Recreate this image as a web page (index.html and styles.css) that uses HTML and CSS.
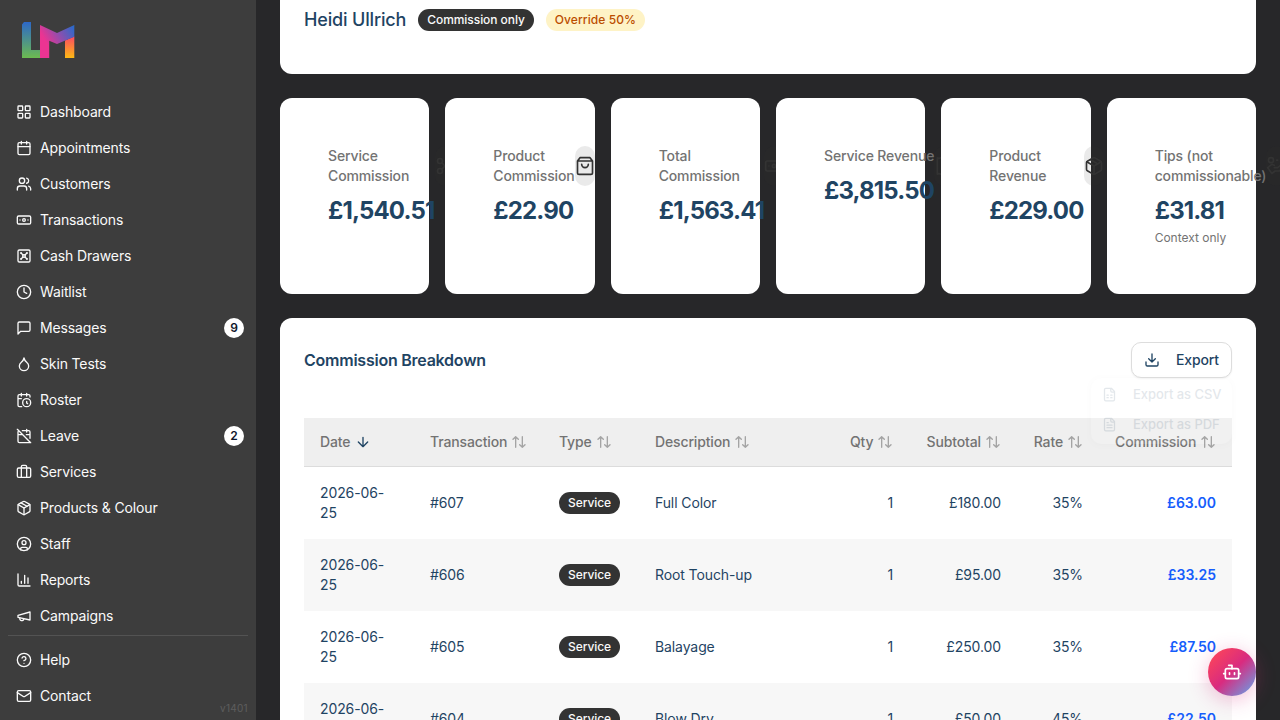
FILE: index.html
```html
<!DOCTYPE html>
<html lang="en">
<head>
<meta charset="utf-8">
<title>Commission report</title>
<link rel="stylesheet" href="styles.css">
</head>
<body>
<svg class="defs" width="0" height="0">
  <symbol id="sort" viewBox="0 0 24 24"><path d="m21 16-4 4-4-4M17 20V4M3 8l4-4 4 4M7 4v16"/></symbol>
  <symbol id="package" viewBox="0 0 24 24"><path d="m7.5 4.27 9 5.15"/><path d="M21 8a2 2 0 0 0-1-1.73l-7-4a2 2 0 0 0-2 0l-7 4A2 2 0 0 0 3 8v8a2 2 0 0 0 1 1.73l7 4a2 2 0 0 0 2 0l7-4A2 2 0 0 0 21 16Z"/><path d="m3.3 7 8.7 5 8.7-5"/><path d="M12 22V12"/></symbol>
  <symbol id="banknote" viewBox="0 0 24 24"><rect width="20" height="12" x="2" y="6" rx="2"/><circle cx="12" cy="12" r="2"/><path d="M6 12h.01M18 12h.01"/></symbol>
</svg>
<div class="app">
  <aside class="sidebar">
    <div class="brand">
      <svg width="56" height="38" viewBox="20 21 56 38">
        <defs>
          <linearGradient id="gl" x1="0" y1="0" x2="0" y2="1"><stop offset="0" stop-color="#2d68c8"/><stop offset="1" stop-color="#6cbb50"/></linearGradient>
          <linearGradient id="gm" gradientUnits="userSpaceOnUse" x1="46" y1="42" x2="73" y2="26"><stop offset="0" stop-color="#eb3492"/><stop offset="1" stop-color="#2b6acb"/></linearGradient>
          <linearGradient id="go" x1="0" y1="0" x2="0" y2="1"><stop offset="0" stop-color="#fb4a63"/><stop offset="1" stop-color="#fdb913"/></linearGradient>
        </defs>
        <path fill="url(#gl)" d="M24 22h7v28h9v8H22V24.500z"/>
        <path fill="url(#go)" d="M65 40.500 74.300 36.500V58H65z"/>
        <path fill="url(#gm)" d="M40 25 57 33 74.300 25V36.800L57 44 49.200 40.700V58H40z"/>
      </svg>
    </div>
    <nav class="nav">
      <a class="item"><svg class="i" viewBox="0 0 24 24"><rect width="7" height="7" x="3" y="3" rx="1"/><rect width="7" height="7" x="14" y="3" rx="1"/><rect width="7" height="7" x="14" y="14" rx="1"/><rect width="7" height="7" x="3" y="14" rx="1"/></svg><span>Dashboard</span></a>
      <a class="item"><svg class="i" viewBox="0 0 24 24"><path d="M8 2v4M16 2v4M3 10h18"/><rect width="18" height="18" x="3" y="4" rx="2"/></svg><span>Appointments</span></a>
      <a class="item"><svg class="i" viewBox="0 0 24 24"><path d="M16 21v-2a4 4 0 0 0-4-4H6a4 4 0 0 0-4 4v2"/><circle cx="9" cy="7" r="4"/><path d="M22 21v-2a4 4 0 0 0-3-3.870M16 3.130a4 4 0 0 1 0 7.750"/></svg><span>Customers</span></a>
      <a class="item"><svg class="i"><use href="#banknote"/></svg><span>Transactions</span></a>
      <a class="item"><svg class="i" viewBox="0 0 24 24"><rect width="18" height="18" x="3" y="3" rx="2"/><circle cx="7.500" cy="7.500" r=".5"/><path d="m7.900 7.900 2.700 2.700"/><circle cx="16.500" cy="7.500" r=".5"/><path d="m13.400 10.600 2.700-2.700"/><circle cx="7.500" cy="16.500" r=".5"/><path d="m7.900 16.100 2.700-2.700"/><circle cx="16.500" cy="16.500" r=".5"/><path d="m13.400 13.400 2.700 2.700"/><circle cx="12" cy="12" r="2"/></svg><span>Cash Drawers</span></a>
      <a class="item"><svg class="i" viewBox="0 0 24 24"><circle cx="12" cy="12" r="10"/><path d="M12 6v6l4 2"/></svg><span>Waitlist</span></a>
      <a class="item"><svg class="i" viewBox="0 0 24 24"><path d="M21 15a2 2 0 0 1-2 2H7l-4 4V5a2 2 0 0 1 2-2h14a2 2 0 0 1 2 2z"/></svg><span>Messages</span><b class="count">9</b></a>
      <a class="item"><svg class="i" viewBox="0 0 24 24"><path d="M12 22a7 7 0 0 0 7-7c0-2-1-3.900-3-5.500s-3.500-4-4-6.500c-.5 2.500-2 4.900-4 6.500C6 11.100 5 13 5 15a7 7 0 0 0 7 7z"/></svg><span>Skin Tests</span></a>
      <a class="item"><svg class="i" viewBox="0 0 24 24"><path d="M21 7.500V6a2 2 0 0 0-2-2H5a2 2 0 0 0-2 2v14a2 2 0 0 0 2 2h3.500M16 2v4M8 2v4M3 10h5M17.500 17.500 16 16.300V14"/><circle cx="16" cy="16" r="6"/></svg><span>Roster</span></a>
      <a class="item"><svg class="i" viewBox="0 0 24 24"><path d="M4.200 4.200A2 2 0 0 0 3 6v14a2 2 0 0 0 2 2h14a2 2 0 0 0 1.820-1.180M21 15.500V6a2 2 0 0 0-2-2H9.500M16 2v4M3 10h7M21 10h-5.500M2 2l20 20"/></svg><span>Leave</span><b class="count">2</b></a>
      <a class="item"><svg class="i" viewBox="0 0 24 24"><path d="M16 20V4a2 2 0 0 0-2-2h-4a2 2 0 0 0-2 2v16"/><rect width="20" height="14" x="2" y="6" rx="2"/></svg><span>Services</span></a>
      <a class="item"><svg class="i"><use href="#package"/></svg><span>Products &amp; Colour</span></a>
      <a class="item"><svg class="i" viewBox="0 0 24 24"><circle cx="12" cy="12" r="10"/><circle cx="12" cy="10" r="3"/><path d="M7 20.662V19a2 2 0 0 1 2-2h6a2 2 0 0 1 2 2v1.662"/></svg><span>Staff</span></a>
      <a class="item"><svg class="i" viewBox="0 0 24 24"><path d="M3 3v16a2 2 0 0 0 2 2h16M18 17V9M13 17V5M8 17v-3"/></svg><span>Reports</span></a>
      <a class="item"><svg class="i" viewBox="0 0 24 24"><path d="m3 11 18-5v12L3 14v-3z"/><path d="M11.600 16.800a3 3 0 1 1-5.800-1.600"/></svg><span>Campaigns</span></a>
    </nav>
    <div class="nav foot">
      <a class="item"><svg class="i" viewBox="0 0 24 24"><circle cx="12" cy="12" r="10"/><path d="M9.090 9a3 3 0 0 1 5.830 1c0 2-3 3-3 3M12 17h.01"/></svg><span>Help</span></a>
      <a class="item"><svg class="i" viewBox="0 0 24 24"><rect width="20" height="16" x="2" y="4" rx="2"/><path d="m22 7-8.970 5.700a1.940 1.940 0 0 1-2.060 0L2 7"/></svg><span>Contact</span></a>
      <span class="version">v1401</span>
    </div>
  </aside>

  <main class="main">
    <section class="card profile">
      <h1>Heidi Ullrich</h1><span class="badge dark">Commission only</span><span class="badge amber">Override 50%</span>
    </section>

    <section class="stats">
      <article class="card stat"><div><p class="label">Service Commission</p><p class="value">£1,540.51</p></div><span class="pill"><svg viewBox="0 0 24 24"><circle cx="6" cy="6" r="3"/><path d="M8.120 8.120 12 12M20 4 8.120 15.880"/><circle cx="6" cy="18" r="3"/><path d="M14.800 14.800 20 20"/></svg></span></article>
      <article class="card stat"><div><p class="label">Product Commission</p><p class="value">£22.90</p></div><span class="pill"><svg viewBox="0 0 24 24"><path d="M6 2 3 6v14a2 2 0 0 0 2 2h14a2 2 0 0 0 2-2V6l-3-4ZM3 6h18M16 10a4 4 0 0 1-8 0"/></svg></span></article>
      <article class="card stat"><div><p class="label">Total Commission</p><p class="value">£1,563.41</p></div><span class="pill"><svg><use href="#banknote"/></svg></span></article>
      <article class="card stat"><div><p class="label oneline">Service Revenue</p><p class="value">£3,815.50</p></div><span class="pill"><svg viewBox="0 0 24 24"><path d="M4 2v20l2-1 2 1 2-1 2 1 2-1 2 1 2-1 2 1V2l-2 1-2-1-2 1-2-1-2 1-2-1-2 1Z"/></svg></span></article>
      <article class="card stat"><div><p class="label">Product Revenue</p><p class="value">£229.00</p></div><span class="pill"><svg><use href="#package"/></svg></span></article>
      <article class="card stat"><div><p class="label">Tips (not commissionable)</p><p class="value">£31.81</p><p class="note">Context only</p></div><span class="pill"><svg viewBox="0 0 24 24"><circle cx="6" cy="5" r="3"/><path d="M13 5h1M2 14l5-4 3 1M2 14l5 7 4-3h5l6-6-3-2-5 4h-4"/></svg></span></article>
    </section>

    <section class="card breakdown">
      <header class="bar">
        <h2>Commission Breakdown</h2>
        <div class="export">
          <button class="btn"><svg class="i" viewBox="0 0 24 24"><path d="M21 15v4a2 2 0 0 1-2 2H5a2 2 0 0 1-2-2v-4M7 10l5 5 5-5M12 15V3"/></svg>Export</button>
          <div class="menu">
            <div><svg class="i" viewBox="0 0 24 24"><path d="M15 2H6a2 2 0 0 0-2 2v16a2 2 0 0 0 2 2h12a2 2 0 0 0 2-2V7ZM14 2v4a2 2 0 0 0 2 2h4M8 13h2M14 13h2M8 17h2M14 17h2"/></svg>Export as CSV</div>
            <div><svg class="i" viewBox="0 0 24 24"><path d="M15 2H6a2 2 0 0 0-2 2v16a2 2 0 0 0 2 2h12a2 2 0 0 0 2-2V7ZM14 2v4a2 2 0 0 0 2 2h4M10 9H8M16 13H8M16 17H8"/></svg>Export as PDF</div>
          </div>
        </div>
      </header>
      <table>
        <colgroup><col class="c1"><col class="c2"><col class="c3"><col class="c4"><col class="c5"><col class="c6"><col class="c7"><col class="c8"></colgroup>
        <thead><tr>
          <th><span>Date<svg class="down" viewBox="0 0 24 24"><path d="M12 5v14M19 12l-7 7-7-7"/></svg></span></th>
          <th><span>Transaction<svg><use href="#sort"/></svg></span></th>
          <th><span>Type<svg><use href="#sort"/></svg></span></th>
          <th><span>Description<svg><use href="#sort"/></svg></span></th>
          <th class="r"><span>Qty<svg><use href="#sort"/></svg></span></th>
          <th class="r"><span>Subtotal<svg><use href="#sort"/></svg></span></th>
          <th class="r"><span>Rate<svg><use href="#sort"/></svg></span></th>
          <th class="r"><span>Commission<svg><use href="#sort"/></svg></span></th>
        </tr></thead>
        <tbody>
          <tr><td>2026-06-25</td><td>#607</td><td><span class="badge dark">Service</span></td><td>Full Color</td><td class="r">1</td><td class="r">£180.00</td><td class="r">35%</td><td class="r com">£63.00</td></tr>
          <tr><td>2026-06-25</td><td>#606</td><td><span class="badge dark">Service</span></td><td>Root Touch-up</td><td class="r">1</td><td class="r">£95.00</td><td class="r">35%</td><td class="r com">£33.25</td></tr>
          <tr><td>2026-06-25</td><td>#605</td><td><span class="badge dark">Service</span></td><td>Balayage</td><td class="r">1</td><td class="r">£250.00</td><td class="r">35%</td><td class="r com">£87.50</td></tr>
          <tr><td>2026-06-25</td><td>#604</td><td><span class="badge dark">Service</span></td><td>Blow Dry</td><td class="r">1</td><td class="r">£50.00</td><td class="r">45%</td><td class="r com">£22.50</td></tr>
        </tbody>
      </table>
    </section>
  </main>
  <button class="fab"><svg viewBox="0 0 24 24"><path d="M12 8V4H8"/><rect width="16" height="12" x="4" y="8" rx="2"/><path d="M2 14h2M20 14h2M15 13v2M9 13v2"/></svg></button>
</div>
</body>
</html>
```
FILE: styles.css
```css
* { box-sizing: border-box; margin: 0; padding: 0; }
body { font: 14px/20px Inter, sans-serif; letter-spacing: -.14px; color: #1f4463; background: #272729; overflow: hidden; }
svg { fill: none; stroke: currentColor; stroke-width: 2; stroke-linecap: round; stroke-linejoin: round; flex: none; }
.defs { display: none; }
.i { width: 16px; height: 16px; }
.app { display: flex; height: 720px; overflow: hidden; }

.sidebar { width: 256px; flex: none; background: #3d3d3d; color: #fafafa; display: flex; flex-direction: column; }
.brand { height: 94px; padding: 21px 20px 0; }
.brand svg { display: block; stroke: none; }
.nav { padding: 0 8px; }
.item { display: flex; align-items: center; gap: 8px; height: 36px; padding: 0 4px 0 8px; }
.count { margin-left: auto; width: 20px; height: 20px; border-radius: 10px; background: #fff; color: #0f172b; font-size: 12px; font-weight: 600; text-align: center; }
.foot { margin: 1px 8px 0; padding: 6px 0 0; border-top: 1px solid #535353; position: relative; }
.version { position: absolute; right: 0; bottom: -2px; font-size: 10px; line-height: 15px; letter-spacing: .3px; color: #5d5d5d; }

.main { width: 976px; margin-left: 24px; flex: none; display: flex; flex-direction: column; gap: 24px; }
.card { background: #fff; border-radius: 12px; }
.profile { flex: none; height: 74px; border-radius: 0 0 12px 12px; padding: 6px 24px 0; display: flex; align-items: flex-start; gap: 12px; }
h1 { font-size: 18px; line-height: 28px; font-weight: 500; letter-spacing: -.16px; }
.badge { display: inline-block; height: 22px; border-radius: 11px; padding: 3px 9px; font-size: 12px; line-height: 16px; font-weight: 500; letter-spacing: -.06px; }
.profile .badge { margin-top: 3px; }
.dark { background: #333; color: #fafafa; }
.amber { background: #fef3c6; color: #bb4d00; letter-spacing: .07px; }

.stats { flex: none; height: 196px; display: grid; grid-template-columns: repeat(6, minmax(0, 1fr)); gap: 16px; }
.stat { padding: 48px; display: flex; align-items: flex-start; position: relative; }
.label { font-weight: 500; color: #737373; }
.oneline { white-space: nowrap; }
.value { font-size: 24px; line-height: 32px; font-weight: 700; margin-top: 9px; white-space: nowrap; letter-spacing: -.85px; }
.note { font-size: 12px; line-height: 16px; color: #737373; margin-top: 3px; letter-spacing: 0; }
.pill { flex: none; width: 20px; height: 40px; border-radius: 10px; background: rgba(51, 51, 51, .1); color: #333; display: flex; align-items: center; }
.pill svg { width: 20px; height: 20px; }

.breakdown { flex: none; height: 460px; padding: 24px; }
.bar { display: flex; justify-content: space-between; align-items: flex-start; height: 76px; }
h2 { font-size: 16px; line-height: 36px; font-weight: 600; letter-spacing: -.24px; }
.export { position: relative; }
.btn { display: flex; align-items: center; gap: 16px; height: 36px; padding: 0 12px; border: 1px solid #ddd; border-radius: 10px; background: #fff; color: #1f4463; font: 500 14px/20px Inter, sans-serif; letter-spacing: -.13px; box-shadow: 0 1px 2px rgba(0, 0, 0, .06); }
.menu { position: absolute; right: 0; top: 36px; width: 141px; height: 66px; padding: 1px 11px; opacity: .12; border-radius: 10px; background: #fff; box-shadow: 0 1px 4px rgba(0, 0, 0, .15); font-size: 13px; font-weight: 500; letter-spacing: -.05px; white-space: nowrap; }
.menu div { display: flex; align-items: center; gap: 16px; height: 30px; }
.menu .i { width: 15px; height: 15px; }

table { width: 928px; table-layout: fixed; border-collapse: separate; border-spacing: 0; }
.c1 { width: 110px; } .c2 { width: 129px; } .c3 { width: 96px; } .c4 { width: 195px; }
.c5 { width: 75px; } .c6 { width: 108px; } .c7 { width: 82px; } .c8 { width: 133px; }
th { height: 49px; padding: 0 16px 1px; background: #efefef; border-bottom: 1px solid #dcdcdc; text-align: left; font-weight: 500; color: #737373; }
th span { display: inline-flex; align-items: center; gap: 4px; vertical-align: middle; }
th svg { width: 16px; height: 16px; opacity: .6; }
th .down { color: #1f4463; opacity: 1; margin-left: 1px; }
td { height: 72px; padding: 0 16px; vertical-align: middle; letter-spacing: -.1px; }
td .badge { vertical-align: middle; }
tbody tr:nth-child(even) { background: #f7f7f7; }
th.r, td.r { text-align: right; }
td.com { color: #155dfc; font-weight: 600; letter-spacing: 0; }

.fab { position: fixed; right: 24px; bottom: 24px; width: 48px; height: 48px; border: 0; border-radius: 50%; display: flex; align-items: center; justify-content: center; color: #fff; background: linear-gradient(135deg, #ff4757 5%, #d92b7f 50%, #5eaaf0 100%); box-shadow: 0 4px 20px rgba(217, 43, 127, .3); }
.fab svg { width: 20px; height: 20px; }
```
